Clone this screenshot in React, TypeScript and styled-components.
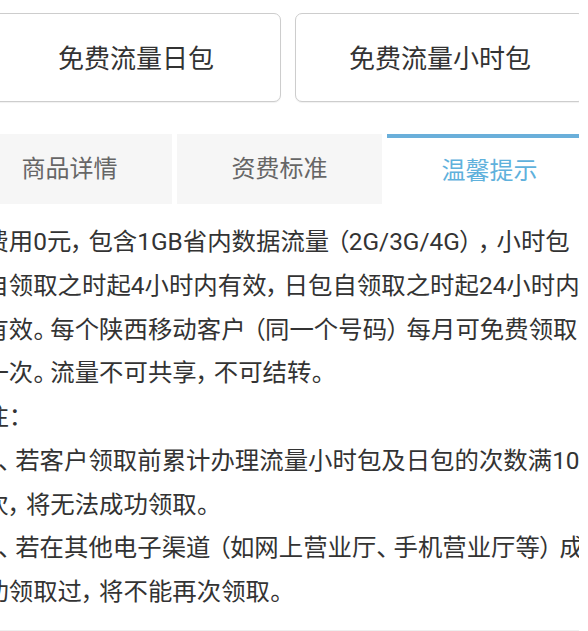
import { FunctionComponent } from "react";
import styled, { createGlobalStyle } from "styled-components";

const GlobalStyle = createGlobalStyle`
  body {
    margin: 0;
    background: #fff;
    font-family: Roboto, "Noto Sans CJK SC", sans-serif;
  }
`;

const packages = ["免费流量日包", "免费流量小时包"];
const tabs = ["商品详情", "资费标准", "温馨提示"];

const lines = [
  "费用0元，包含1GB省内数据流量（2G/3G/4G），小时包",
  "自领取之时起4小时内有效，日包自领取之时起24小时内",
  "有效。每个陕西移动客户（同一个号码）每月可免费领取",
  "一次。流量不可共享，不可结转。",
  "注：",
  "1、若客户领取前累计办理流量小时包及日包的次数满10",
  "次，将无法成功领取。",
  "2、若在其他电子渠道（如网上营业厅、手机营业厅等）成",
  "功领取过，将不能再次领取。",
];

const PUNCT = "，。、：）（";

const renderLine = (text: string) =>
  Array.from(text).map((ch, idx) =>
    PUNCT.includes(ch) ? (
      <Punct key={idx} $open={ch === "（"} $paren={ch === "（" || ch === "）"}>
        {ch}
      </Punct>
    ) : (
      ch
    )
  );

const App: FunctionComponent = () => {
  return (
    <Frame>
      <GlobalStyle />
      <Page>
        <ButtonRow>
          {packages.map((name) => (
            <PackButton key={name}>{name}</PackButton>
          ))}
        </ButtonRow>
        <TabBar>
          {tabs.map((name, idx) => (
            <Tab key={name} $active={idx === 2}>
              {name}
            </Tab>
          ))}
        </TabBar>
        <Content>
          {lines.map((line, idx) => (
            <Line key={idx}>{renderLine(line)}</Line>
          ))}
        </Content>
      </Page>
    </Frame>
  );
};

const Frame = styled.div`
  width: 579px;
  height: 631px;
  overflow: hidden;
  background: #fff;
`;

const Page = styled.div`
  margin-left: -33px;
  width: 640px;
`;

const ButtonRow = styled.div`
  display: grid;
  grid-template-columns: 290px 290px;
  column-gap: 14px;
  padding: 13px 0 0 24px;
`;

const PackButton = styled.button`
  height: 89px;
  padding: 0 0 3px;
  border: 1px solid #cdcdcd;
  border-radius: 7px;
  background: #fff;
  box-shadow: 0 1px 1px rgba(0, 0, 0, 0.06);
  font-family: inherit;
  font-size: 26px;
  color: #333;
`;

const TabBar = styled.div`
  display: grid;
  grid-template-columns: repeat(3, 205px);
  column-gap: 5px;
  margin-top: 32px;
`;

const Tab = styled.div<{ $active?: boolean }>`
  box-sizing: border-box;
  height: 70px;
  padding-bottom: 5px;
  display: flex;
  align-items: center;
  justify-content: center;
  font-size: 24px;
  background: ${(p) => (p.$active ? "#fff" : "#f6f6f6")};
  color: ${(p) => (p.$active ? "#5fb1dc" : "#666")};
  border-top: ${(p) => (p.$active ? "4px solid #6aafda" : "none")};
`;

const Content = styled.div`
  padding: 16px 0 16px 17.4px;
  border-bottom: 1px solid #eee;
  font-size: 24.4px;
  line-height: 43.75px;
  color: #333;
  font-feature-settings: "palt";
`;

const Line = styled.div`
  white-space: nowrap;
`;

const Punct = styled.span<{ $open?: boolean; $paren?: boolean }>`
  ${(p) => (p.$open ? "padding-left" : "padding-right")}: ${(p) =>
    p.$paren ? "0.3em" : "0.2em"};
`;

export default App;
